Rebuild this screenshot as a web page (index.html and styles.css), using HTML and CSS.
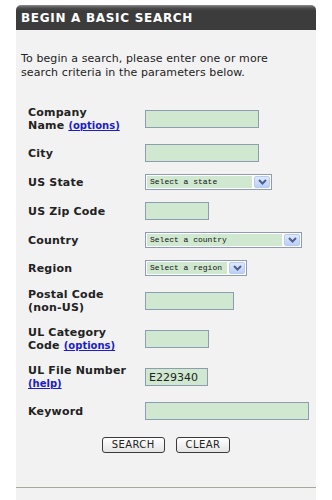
FILE: index.html
```html
<!DOCTYPE html>
<html lang="en">
<head>
  <meta charset="UTF-8">
  <title>Begin a Basic Search</title>
  <link rel="stylesheet" href="styles.css">
</head>
<body>

  <div class="panel">
    <h2 class="panel-title">BEGIN A BASIC SEARCH</h2>

    <div class="panel-body">
      <p class="intro">To begin a search, please enter one or more search criteria in the parameters below.</p>

      <form class="search-form" onsubmit="return false;">
        <div class="label">Company<br>Name <a href="#">(options)</a></div>
        <div><input type="text" class="field" style="width: 114px;"></div>

        <div class="label">City</div>
        <div><input type="text" class="field" style="width: 114px;"></div>

        <div class="label">US State</div>
        <div>
          <div class="select" style="width: 127px;">
            <span class="select-text">Select a state</span>
            <span class="select-arrow"><svg width="9" height="6" viewBox="0 0 9 6"><path d="M1 1l3.5 3.5L8 1" fill="none" stroke="#4d6185" stroke-width="2"/></svg></span>
          </div>
        </div>

        <div class="label">US Zip Code</div>
        <div><input type="text" class="field" style="width: 64px;"></div>

        <div class="label">Country</div>
        <div>
          <div class="select" style="width: 157px;">
            <span class="select-text">Select a country</span>
            <span class="select-arrow"><svg width="9" height="6" viewBox="0 0 9 6"><path d="M1 1l3.5 3.5L8 1" fill="none" stroke="#4d6185" stroke-width="2"/></svg></span>
          </div>
        </div>

        <div class="label">Region</div>
        <div>
          <div class="select" style="width: 102px;">
            <span class="select-text">Select a region</span>
            <span class="select-arrow"><svg width="9" height="6" viewBox="0 0 9 6"><path d="M1 1l3.5 3.5L8 1" fill="none" stroke="#4d6185" stroke-width="2"/></svg></span>
          </div>
        </div>

        <div class="label">Postal Code<br>(non-US)</div>
        <div><input type="text" class="field" style="width: 89px;"></div>

        <div class="label">UL Category<br>Code <a href="#">(options)</a></div>
        <div><input type="text" class="field" style="width: 64px;"></div>

        <div class="label">UL File Number<br><a href="#">(help)</a></div>
        <div><input type="text" class="field" value="E229340" style="width: 63px;"></div>

        <div class="label">Keyword</div>
        <div><input type="text" class="field" style="width: 164px;"></div>
      </form>

      <div class="buttons">
        <button type="button" class="btn">SEARCH</button>
        <button type="button" class="btn">CLEAR</button>
      </div>
    </div>

    <div class="panel-foot"></div>
  </div>

</body>
</html>
```

FILE: styles.css
```css
body {
  margin: 0;
  background: #fff;
  font-family: "DejaVu Sans", Verdana, sans-serif;
  color: #222;
}

.panel {
  width: 300px;
  margin-left: 16px;
  padding-top: 5px;
}

.panel-title {
  margin: 0;
  height: 25px;
  line-height: 26px;
  padding-left: 5px;
  border-radius: 5px 5px 0 0;
  background: linear-gradient(#8c8c8c 0, #4c4c4c 3px, #3c3c3c 6px);
  color: #fff;
  font-size: 12px;
  font-weight: bold;
  letter-spacing: 0.7px;
}

.panel-body {
  background: #f2f2f2;
  padding: 22px 0 34px;
  border-bottom: 1px solid #a7a996;
}

.intro {
  width: 262px;
  margin: 0 0 26px 5px;
  font-size: 11px;
  line-height: 14px;
  letter-spacing: 0.1px;
}

.search-form {
  display: grid;
  grid-template-columns: 117px auto;
  row-gap: 12px;
  align-items: center;
  padding-left: 12px;
  margin: 0;
}

.label {
  font-size: 11px;
  font-weight: bold;
  line-height: 13px;
  letter-spacing: 0.2px;
}

.label a {
  color: #1c1ccc;
  font-size: 10px;
  letter-spacing: 0;
  text-decoration: underline;
}

.field {
  display: block;
  box-sizing: border-box;
  height: 18px;
  margin: 0;
  padding: 0 3px;
  border: 1px solid #8d9cb2;
  background: #cfe8cf;
  font-family: "DejaVu Sans", Verdana, sans-serif;
  font-size: 11px;
  color: #222;
}

.select {
  display: flex;
  box-sizing: border-box;
  height: 16px;
  padding: 1px;
  border: 1px solid #8d9cb2;
  background: #fff;
}

.select-text {
  flex: 1;
  background: #cfe8cf;
  padding-left: 3px;
  font-family: "Liberation Mono", monospace;
  font-size: 8px;
  line-height: 12px;
  color: #111;
}

.select-arrow {
  display: flex;
  align-items: center;
  justify-content: center;
  box-sizing: border-box;
  width: 16px;
  margin-left: 2px;
  border: 1px solid #b9c9ef;
  border-radius: 2px;
  background: linear-gradient(#dfe8fe, #bccff9);
}

.buttons {
  display: flex;
  justify-content: center;
  gap: 11px;
  margin-top: 17px;
}

.btn {
  box-sizing: border-box;
  height: 16px;
  padding: 0 9px;
  border: 1px solid #3a3a3a;
  border-radius: 3px;
  background: linear-gradient(#fff, #e4e4e4);
  font-family: "DejaVu Sans", Verdana, sans-serif;
  font-size: 10px;
  line-height: 14px;
  letter-spacing: 0.4px;
  color: #222;
  cursor: pointer;
}

.panel-foot {
  height: 18px;
  background: #f2f2f2;
}
```
